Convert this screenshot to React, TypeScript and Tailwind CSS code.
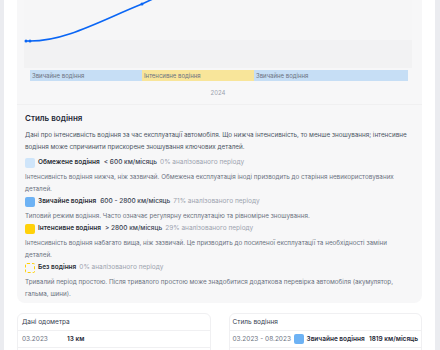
import React from 'react';

interface StyleItem {
  label: string;
  range?: string;
  share: string;
  desc: string[];
  swatch: string;
}

const items: StyleItem[] = [
  {
    label: 'Обмежене водіння',
    range: '< 600 км/місяць',
    share: '0% аналізованого періоду',
    desc: [
      'Інтенсивність водіння нижча, ніж зазвичай. Обмежена експлуатація іноді призводить до старіння невикористовуваних',
      'деталей.',
    ],
    swatch: 'bg-[#cfe5fa]',
  },
  {
    label: 'Звичайне водіння',
    range: '600 - 2800 км/місяць',
    share: '71% аналізованого періоду',
    desc: ['Типовий режим водіння. Часто означає регулярну експлуатацію та рівномірне зношування.'],
    swatch: 'bg-[#6db2f4]',
  },
  {
    label: 'Інтенсивне водіння',
    range: '> 2800 км/місяць',
    share: '29% аналізованого періоду',
    desc: [
      'Інтенсивність водіння набагато вища, ніж зазвичай. Це призводить до посиленої експлуатації та необхідності заміни',
      'деталей.',
    ],
    swatch: 'bg-[#ffd10a]',
  },
  {
    label: 'Без водіння',
    share: '0% аналізованого періоду',
    desc: [
      'Тривалий період простою. Після тривалого простою може знадобитися додаткова перевірка автомобіля (акумулятор,',
      'гальма, шини).',
    ],
    swatch: 'border border-dashed border-[#ffd10a]',
  },
];

const Lines: React.FC<{ lines: string[] }> = ({ lines }) => (
  <>
    {lines.map((l, i) => (
      <span key={i} className="block whitespace-nowrap">
        {l}
      </span>
    ))}
  </>
);

const Chart: React.FC = () => (
  <div className="pl-[7px] pr-[10px]">
    <div className="relative h-[68px] overflow-hidden bg-[#f6f6f7]">
      <div className="absolute inset-x-0 bottom-0 h-[28px] bg-[#f2f2f3]" />
      <svg className="absolute inset-0" width="389" height="68" viewBox="0 0 389 68">
        <path
          d="M2 41 L6 41 C42 41 78 20 118 4 L133 -3"
          fill="none"
          stroke="#0a66f5"
          strokeWidth="1.6"
          strokeLinecap="round"
        />
        <circle cx="2" cy="41" r="1.5" fill="#0a66f5" />
        <circle cx="6" cy="41" r="1.5" fill="#0a66f5" />
        <circle cx="118" cy="4" r="1.5" fill="#0a66f5" />
      </svg>
    </div>
    <div className="ml-[6px] mr-[4px] mt-[2px] flex h-[11px] text-[6px] leading-[11px] text-[#6b7280]">
      <div className="w-[112px] bg-[#c6def5] pl-[2px]">Звичайне водіння</div>
      <div className="w-[112px] bg-[#f8e59a] pl-[2px]">Інтенсивне водіння</div>
      <div className="flex-1 bg-[#c6def5] pl-[2px]">Звичайне водіння</div>
    </div>
    <div className="pt-[7px] pb-[6px] text-center text-[6px] leading-[10px] text-[#9ca3af]">2024</div>
  </div>
);

const Swatch: React.FC<{ cls: string }> = ({ cls }) => (
  <span className={`inline-block h-[10px] w-[10px] shrink-0 rounded-[2px] ${cls}`} />
);

export default function App() {
  return (
    <div
      className="min-h-[350px] bg-[#ebecf0] px-[4px] pr-[5px]"
      style={{ fontFamily: 'Inter, "Noto Sans", sans-serif' }}
    >
      <div className="h-[350px] overflow-hidden bg-white px-[13px]">
        <div className="rounded-b-lg bg-[#f7f7f8] pb-[3px]">
          <Chart />
          <div className="border-t border-[#f0f0f1] px-[8px] pt-[7px]">
            <h3 className="text-[8px] font-semibold leading-[12px] text-[#1f2937]">Стиль водіння</h3>
            <p className="mt-[5px] text-[6.3px] leading-[12px] text-[#4b5563]">
              <Lines
                lines={[
                  'Дані про інтенсивність водіння за час експлуатації автомобіля. Що нижча інтенсивність, то менше зношування; інтенсивне',
                  'водіння може спричинити прискорене зношування ключових деталей.',
                ]}
              />
            </p>
            <div className="mt-[3px] flex flex-col">
              {items.map((it) => (
                <div key={it.label}>
                  <div className="flex h-[14px] items-center whitespace-nowrap text-[6.5px]">
                    <Swatch cls={it.swatch} />
                    <span className="ml-[3px] font-semibold text-[#2b2f36]">{it.label}</span>
                    {it.range && <span className="ml-[4px] font-medium text-[#374151]">{it.range}</span>}
                    <span className="ml-[3px] text-[#9ca3af]">{it.share}</span>
                  </div>
                  <p className="mt-[1px] text-[6.3px] leading-[12px] text-[#6b7280]">
                    <Lines lines={it.desc} />
                  </p>
                </div>
              ))}
            </div>
          </div>
        </div>

        <div className="mt-[10px] grid grid-cols-2 gap-[18px] whitespace-nowrap text-[6.5px]">
          <div className="rounded-md border border-[#f0f0f2]">
            <div className="px-[4px] py-[3px] leading-[10px] text-[#374151]">Дані одометра</div>
            <div className="flex items-center border-t border-[#f0f0f2] px-[4px] py-[3px] leading-[10px]">
              <span className="w-[45px] text-[#6b7280]">03.2023</span>
              <span className="font-semibold text-[#1f2937]">13 км</span>
            </div>
            <div className="h-[20px] border-t border-[#f0f0f2]" />
          </div>
          <div className="rounded-md border border-[#f0f0f2]">
            <div className="px-[3px] py-[3px] leading-[10px] text-[#374151]">Стиль водіння</div>
            <div className="flex items-center border-t border-[#f0f0f2] px-[3px] py-[3px] leading-[10px]">
              <span className="w-[61px] shrink-0 text-[#6b7280]">03.2023 - 08.2023</span>
              <Swatch cls="bg-[#6db2f4]" />
              <span className="ml-[3px] font-semibold text-[#1f2937]">Звичайне водіння</span>
              <span className="ml-auto font-semibold text-[#1f2937]">1819 км/місяць</span>
            </div>
            <div className="h-[20px] border-t border-[#f0f0f2]" />
          </div>
        </div>
      </div>
    </div>
  );
}
